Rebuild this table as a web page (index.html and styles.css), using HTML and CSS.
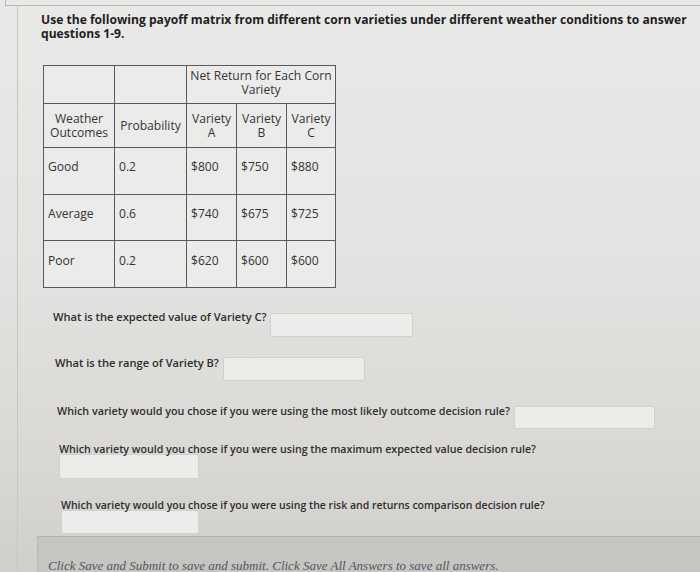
FILE: index.html
```html
<!DOCTYPE html>
<html>
<head>
<meta charset="utf-8">
<link rel="stylesheet" href="styles.css">
</head>
<body>
<div class="topstrip"></div>
<div class="page">
  <div class="content">
    <h1 class="title">Use the following payoff matrix from different corn varieties under different weather conditions to answer questions 1-9.</h1>
    <table class="matrix">
      <tr class="r1">
        <td class="c1"></td>
        <td class="c2"></td>
        <td class="head" colspan="3">Net Return for Each Corn Variety</td>
      </tr>
      <tr class="r2">
        <td class="head">Weather Outcomes</td>
        <td class="head">Probability</td>
        <td class="head">Variety A</td>
        <td class="head">Variety B</td>
        <td class="head">Variety C</td>
      </tr>
      <tr class="r3">
        <td>Good</td><td>0.2</td><td>$800</td><td>$750</td><td>$880</td>
      </tr>
      <tr class="r4">
        <td>Average</td><td>0.6</td><td>$740</td><td>$675</td><td>$725</td>
      </tr>
      <tr class="r5">
        <td>Poor</td><td>0.2</td><td>$620</td><td>$600</td><td>$600</td>
      </tr>
    </table>

    <div class="q q1"><span class="lbl">What is the expected value of Variety C?</span><span class="box b1"></span></div>
    <div class="q q2"><span class="lbl">What is the range of Variety B?</span><span class="box b2"></span></div>
    <div class="q q3"><span class="lbl">Which variety would you chose if you were using the most likely outcome decision rule?</span><span class="box b3"></span></div>
    <div class="q q4"><div class="lbl">Which variety would you chose if you were using the maximum expected value decision rule?</div><div class="box b4"></div></div>
    <div class="q q5"><div class="lbl">Which variety would you chose if you were using the risk and returns comparison decision rule?</div><div class="box b5"></div></div>
  </div>
  <div class="footer">
    <p class="ftext">Click Save and Submit to save and submit. Click Save All Answers to save all answers.</p>
  </div>
</div>
</body>
</html>
```
FILE: styles.css
```css
html, body {
  margin: 0;
  padding: 0;
  height: 572px;
  overflow: hidden;
}
body {
  background: linear-gradient(180deg, #e9e9e7 0%, #e3e3e1 45%, #d9d8d5 80%, #d0cfcc 100%);
  font-family: "Open Sans", "DejaVu Sans", sans-serif;
  color: #2c2c2c;
}
.topstrip {
  height: 5px;
  margin-left: 5px;
  border-left: 1px solid #b8b8b6;
  border-bottom: 1px solid #b8b8b6;
}
.page {
  margin-left: 17px;
  border-left: 1px solid #c6c6c3;
  height: 566px;
  display: flex;
  flex-direction: column;
}
.content {
  padding-left: 23px;
  flex: 1;
}
.title {
  margin: 7px 0 0 0;
  font-size: 12.1px;
  line-height: 14px;
  font-weight: 700;
  color: #1f1f1f;
  width: 660px;
}
.matrix {
  margin: 24px 0 0 2px;
  border-collapse: collapse;
  font-size: 12.1px;
  color: #353535;
  background: #ebebe9;
}
.matrix td {
  border: 1px solid #5a5a5a;
  padding: 12px 0 0 4px;
  vertical-align: top;
  line-height: 14px;
  box-sizing: border-box;
}
.matrix td.head {
  text-align: center;
  vertical-align: middle;
  padding: 0 1px;
}
.r1 td.c1 { width: 71px; }
.r1 td.c2 { width: 72px; }
.r2 td:nth-child(1) { width: 71px; }
.r2 td:nth-child(2) { width: 72px; }
.r2 td:nth-child(3) { width: 50px; }
.r2 td:nth-child(4) { width: 50px; }
.r2 td:nth-child(5) { width: 49px; }
.r1 td { height: 38px; }
.r1 td.head { padding-top: 3px; vertical-align: top; }
.r2 td { height: 44px; }
.r3 td { height: 47px; }
.r4 td { height: 46px; padding-top: 12px; }
.r5 td { height: 47px; padding-top: 13px; }

.q {
  font-size: 11.1px;
  font-weight: 600;
  color: #2e2e2e;
  line-height: 14px;
}
.q1, .q2, .q3 {
  display: flex;
  align-items: flex-start;
}
.box {
  background: #ececea;
  border: 1px solid #d0d0cd;
  border-radius: 2px;
  box-sizing: border-box;
}
.q1 { margin: 22px 0 0 12px; }
.b1 { width: 143px; height: 24px; margin: 3px 0 0 3px; }
.q2 { margin: 19px 0 0 14px; }
.b2 { width: 142px; height: 24px; margin: 1px 0 0 4px; }
.q3 { margin: 23px 0 0 16px; font-size: 10.75px; }
.b3 { width: 141px; height: 23px; margin: 2px 0 0 4px; }
.q4 { margin: 13px 0 0 18px; font-size: 10.65px; }
.b4 { width: 140px; height: 25px; margin-top: -2px; }
.q5 { margin: 19px 0 0 20px; font-size: 10.5px; }
.b5 { width: 138px; height: 24px; margin-top: -2px; }

.footer {
  margin-left: 19px;
  height: 35px;
  background: #c6c5c1;
  border-top: 1px solid #b3b2ae;
  border-left: 1px solid #b9b8b4;
  overflow: hidden;
}
.ftext {
  margin: 21px 0 0 10px;
  font-family: "Liberation Serif", "DejaVu Serif", serif;
  font-style: italic;
  font-size: 13px;
  line-height: 15px;
  color: #4f5563;
  white-space: nowrap;
}
```
